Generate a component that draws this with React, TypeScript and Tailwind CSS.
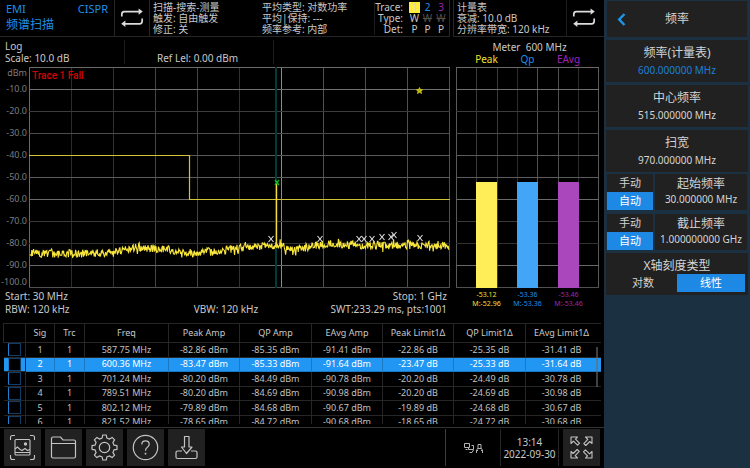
import type { ReactNode } from "react";

const FONT = "font-['Noto_Sans','Noto_Sans_CJK_SC',sans-serif]";

/* ---------- icons ---------- */

function LoopIcon() {
  return (
    <svg width="24" height="20" viewBox="0 0 24 20" fill="none" stroke="#dcdcdc" strokeWidth="1.7" aria-hidden="true">
      <path d="M1.8 8.6V6.2Q1.8 3.6 4.4 3.6H19" />
      <path d="M18.6 .4L22.8 3.6L18.6 6.8Z" fill="#dcdcdc" stroke="none" />
      <path d="M22.2 10.6V13Q22.2 15.8 19.6 15.8H5" />
      <path d="M5.4 12.6L1.2 15.8L5.4 19Z" fill="#dcdcdc" stroke="none" />
    </svg>
  );
}

function ScreenshotIcon() {
  return (
    <svg width="27" height="27" viewBox="0 0 27 27" fill="none" stroke="#c4c4c4" strokeWidth="1.1" aria-hidden="true">
      <path d="M1.5 6V3.5Q1.5 1.5 3.5 1.5H6M21 1.5H23.5Q25.5 1.5 25.5 3.5V6M25.5 21V23.5Q25.5 25.5 23.5 25.5H21M6 25.5H3.5Q1.5 25.5 1.5 23.5V21" />
      <rect x="6" y="5.5" width="15" height="15.5" rx="1" />
      <circle cx="16.5" cy="10" r="1.1" fill="#c4c4c4" />
      <path d="M6 15L8.5 13L11 15.5L13 16.5L16 14.5L18.5 16.5L21 15.5M6 18.5H21" />
    </svg>
  );
}

function FolderIcon() {
  return (
    <svg width="27" height="25" viewBox="0 0 27 25" fill="none" stroke="#c4c4c4" strokeWidth="1.2" aria-hidden="true">
      <path d="M1.5 21.5V3.5Q1.5 2 3 2H10.5L13 5H24Q25.5 5 25.5 6.5V21.5Q25.5 23 24 23H3Q1.5 23 1.5 21.5ZM1.5 8.5H25.5" />
    </svg>
  );
}

function GearIcon() {
  const teeth = 8;
  const pts: string[] = [];
  for (let i = 0; i < teeth; i++) {
    const base = (i / teeth) * Math.PI * 2 - Math.PI / 2;
    const shape: [number, number][] = [
      [-0.24, 9.8],
      [-0.14, 12.6],
      [0.14, 12.6],
      [0.24, 9.8],
    ];
    for (const [d, r] of shape) {
      pts.push(`${(13.5 + Math.cos(base + d) * r).toFixed(1)},${(13.5 + Math.sin(base + d) * r).toFixed(1)}`);
    }
  }
  return (
    <svg width="27" height="27" viewBox="0 0 27 27" fill="none" stroke="#c4c4c4" strokeWidth="1.2" strokeLinejoin="round" aria-hidden="true">
      <polygon points={pts.join(" ")} />
      <circle cx="13.5" cy="13.5" r="5.2" />
    </svg>
  );
}

function HelpIcon() {
  return (
    <svg width="27" height="27" viewBox="0 0 27 27" fill="none" stroke="#c4c4c4" strokeWidth="1.2" aria-hidden="true">
      <circle cx="13.5" cy="13.5" r="12.2" />
      <path d="M9.8 10.5Q9.8 6.8 13.5 6.8T17.2 10.3Q17.2 12 15.4 13.2Q13.5 14.4 13.5 16.8" />
      <path d="M13.5 18.8V20.5" strokeWidth="1.6" />
    </svg>
  );
}

function SaveIcon() {
  return (
    <svg width="25" height="25" viewBox="0 0 25 25" fill="none" stroke="#c4c4c4" strokeWidth="1.2" strokeLinejoin="round" aria-hidden="true">
      <path d="M10.5 1.5H15V12H18L12.5 18.5L7.500 12H10.500Z" />
      <path d="M8 16H3.5Q2 16 2 17.5V22Q2 23.5 3.5 23.5H21.5Q23 23.5 23 22V17.5Q23 16 21.5 16H17" />
    </svg>
  );
}

function ExpandIcon() {
  const arrow = "M2 2H8.5L6.5 4.2L10.5 8.2L8.6 10.2L4.4 6.2L2 8.5Z";
  return (
    <svg width="25" height="25" viewBox="0 0 25 25" fill="none" stroke="#c4c4c4" strokeWidth="1.1" strokeLinejoin="round" aria-hidden="true">
      <path d={arrow} />
      <path d={arrow} transform="rotate(90 12.5 12.5)" />
      <path d={arrow} transform="rotate(180 12.5 12.5)" />
      <path d={arrow} transform="rotate(270 12.5 12.5)" />
    </svg>
  );
}

function NetworkIcon() {
  return (
    <svg width="21" height="12" viewBox="0 0 21 12" fill="none" stroke="#b4b4b4" strokeWidth="1" aria-label="LAN" role="img">
      <path d="M1.5 1.5H6.500V5.500H1.500ZM2.500 7.500H4.500" />
      <path d="M8.500 3.500H10.500V7.500H5.500V5.500M6.500 10.500H9L10.500 8" />
      <path d="M13.500 11V8.500L14.500 6.500H18.500L19.500 8.500V11M15 6.500V2.500H18V6.500M13.500 8.500H15M18 8.500H19.500" />
    </svg>
  );
}

/* ---------- spectrum plot ---------- */

const H_SHADES = ["#6a6a6a", "#707070", "#3c3c3c", "#4c4c4c", "#5a5a5a", "#5c5c5c", "#6a6a6a", "#3a3a3a", "#303030", "#686868", "#505050"];
const V_SHADES = ["#6a6a6a", "#2c2c2c", "#303030", "#444444", "#444444", "#303030", "#8a8a8a", "#505050", "#505050", "#505050", "#505050"];

const BASELINE: [number, number][] = [
  [0, 185], [15, 187], [85, 186], [106, 181], [136, 182], [161, 186], [181, 185],
  [211, 181], [246, 178], [262, 182], [280, 180], [296, 177], [330, 178], [420, 179],
];

function baselineAt(x: number) {
  for (let i = 1; i < BASELINE.length; i++) {
    const [x0, y0] = BASELINE[i - 1];
    const [x1, y1] = BASELINE[i];
    if (x <= x1) return y0 + ((y1 - y0) * (x - x0)) / (x1 - x0);
  }
  return 179;
}

function noiseTrace() {
  let seed = 90210;
  const next = () => {
    seed = (seed * 1103515245 + 12345) % 2147483648;
    return seed / 2147483648;
  };
  const pts: string[] = [];
  for (let x = 1; x <= 420; x += 0.6) {
    const swing = next() > 0.88 ? 14 : 8;
    pts.push(`${x.toFixed(1)},${(baselineAt(x) + (next() - 0.5) * swing).toFixed(1)}`);
  }
  return pts.join(" ");
}

const TRACE = noiseTrace();

const MARKERS: [number, number][] = [
  [242, 172], [291, 172], [330, 172], [335, 172], [343, 172], [353, 170], [362, 170], [365, 168], [391, 171],
];

function SpectrumPlot() {
  return (
    <svg className="block h-[221px] w-full" viewBox="0 0 421 221" preserveAspectRatio="none" role="img" aria-label="Spectrum">
      <g shapeRendering="crispEdges">
        {V_SHADES.map((c, i) => (
          <rect key={i} x={i * 42} y="0" width="1" height="221" fill={c} />
        ))}
        {H_SHADES.map((c, i) => (
          <rect key={i} x="0" y={i * 22} width="421" height="1" fill={c} />
        ))}
        <rect x="246" y="0" width="2" height="221" fill="#033a38" />
      </g>
      <path d="M0 88.5H160.5V132.5H421" fill="none" stroke="#d2c238" strokeWidth="1.2" />
      <polyline points={TRACE} fill="none" stroke="#f8e63c" strokeWidth="1.1" />
      <path d="M247.5 180V117" stroke="#f3dc3a" strokeWidth="1.4" />
      <g fill="none" stroke="#e0e0e0" strokeWidth="1.1">
        {MARKERS.map(([x, y]) => (
          <path key={x} d={`M${x - 2.5} ${y - 3}L${x + 2.5} ${y + 3}M${x + 2.5} ${y - 3}L${x - 2.5} ${y + 3}`} />
        ))}
      </g>
      <path d="M246 113L250 118M250 113L246 118" stroke="#10c020" strokeWidth="1.3" />
      <path d="M390.5 20.5L391.4 22.6L393.6 22.8L392 24.3L392.5 26.5L390.5 25.3L388.5 26.5L389 24.3L387.4 22.8L389.6 22.6Z" fill="#b8b410" stroke="#e0dc10" strokeWidth="0.7" />
    </svg>
  );
}

function MeterPlot() {
  const cols = [0, 20, 41, 61, 81, 102, 122, 142];
  const shades = ["#5a5a5a", "#3a3a3a", "#3a3a3a", "#2c2c2c", "#505050", "#505050", "#2c2c2c", "#5a5a5a"];
  return (
    <svg className="block h-[221px] w-full" viewBox="0 0 143 221" preserveAspectRatio="none" shapeRendering="crispEdges" role="img" aria-label="Meter">
      {cols.map((x, i) => (
        <rect key={x} x={x} y="0" width="1" height="221" fill={shades[i]} />
      ))}
      {H_SHADES.map((c, i) => (
        <rect key={i} x="0" y={i * 22} width="143" height="1" fill={c} />
      ))}
      <rect x="20" y="115" width="21" height="106" fill="#ffee58" />
      <rect x="61" y="115" width="21" height="106" fill="#42a5f5" />
      <rect x="102" y="115" width="21" height="106" fill="#ab47bc" />
    </svg>
  );
}

/* ---------- signal table ---------- */

const HEADS = ["Sig", "Trc", "Freq", "Peak Amp", "QP Amp", "EAvg Amp", "Peak Limit1Δ", "QP Limit1Δ", "EAvg Limit1Δ"];
const ROWS = [
  ["1", "1", "587.75 MHz", "-82.86 dBm", "-85.35 dBm", "-91.41 dBm", "-22.86 dB", "-25.35 dB", "-31.41 dB"],
  ["2", "1", "600.36 MHz", "-83.47 dBm", "-85.33 dBm", "-91.64 dBm", "-23.47 dB", "-25.33 dB", "-31.64 dB"],
  ["3", "1", "701.24 MHz", "-80.20 dBm", "-84.49 dBm", "-90.78 dBm", "-20.20 dB", "-24.49 dB", "-30.78 dB"],
  ["4", "1", "789.51 MHz", "-80.20 dBm", "-84.69 dBm", "-90.98 dBm", "-20.20 dB", "-24.69 dB", "-30.98 dB"],
  ["5", "1", "802.12 MHz", "-79.89 dBm", "-84.68 dBm", "-90.67 dBm", "-19.89 dB", "-24.68 dB", "-30.67 dB"],
  ["6", "1", "821.52 MHz", "-78.65 dBm", "-84.72 dBm", "-90.68 dBm", "-18.65 dB", "-24.72 dB", "-30.68 dB"],
];

function SignalTable() {
  return (
    <div className="relative mx-[3px] h-[101px] overflow-hidden">
      <table className="h-[107px] w-full table-fixed border-collapse text-center text-[9px] leading-[12px]">
        <colgroup>
          <col className="w-[22px]" />
          <col className="w-[29px]" />
          <col className="w-[30px]" />
          <col className="w-[84px]" />
          <col className="w-[71px]" />
          <col className="w-[72px]" />
          <col className="w-[71px]" />
          <col className="w-[71px]" />
          <col className="w-[72px]" />
          <col className="w-[76px]" />
        </colgroup>
        <thead>
          <tr className="h-[19px]">
            <th className="border border-[#262626] p-0" aria-label="Select" />
            {HEADS.map((h) => (
              <th key={h} className="border border-[#262626] p-0 font-normal whitespace-nowrap last:pr-1">{h}</th>
            ))}
          </tr>
        </thead>
        <tbody>
          {ROWS.map((row, r) => (
            <tr key={row[0]} className={r === 1 ? "bg-[#2196f3] text-white" : "text-[#c0c0c0]"}>
              <td className="border-r border-b border-[#262626] p-0">
                <input
                  type="checkbox"
                  aria-label={`Signal ${row[0]}`}
                  className="mx-auto block h-[13px] w-[13px] appearance-none border border-[#0f3d66] border-l-[#2080d0] bg-black"
                />
              </td>
              {row.map((cell, c) => (
                <td
                  key={c}
                  className={
                    r === 1
                      ? "border-r border-b border-[#1c78c0] p-0 whitespace-nowrap last:pr-1"
                      : "border-r border-b border-[#262626] p-0 whitespace-nowrap last:pr-1"
                  }
                >
                  {cell}
                </td>
              ))}
            </tr>
          ))}
        </tbody>
      </table>
      <div className="absolute top-[24px] right-[3px] h-[40px] w-[2px] bg-[#6a6a6a]/60" />
    </div>
  );
}

/* ---------- side menu ---------- */

function ValueKey({ label, value, active }: { label: string; value: string; active?: boolean }) {
  return (
    <button type="button" className="flex h-[42px] flex-col items-center justify-center gap-[3px] bg-[#212121]">
      <span className="text-[12px] leading-[15px]">{label}</span>
      <span className={active ? "text-[10px] leading-[14px] text-[#1e7fd6]" : "text-[10px] leading-[14px]"}>{value}</span>
    </button>
  );
}

function AutoKey({ label, value }: { label: string; value: string }) {
  return (
    <div className="mx-px flex h-9 gap-[2px]">
      <div className="flex w-[46px] flex-col text-[11px] leading-[18px]" role="group" aria-label={label}>
        <button type="button" aria-pressed="false" className="h-[18px] bg-[#212121]">手动</button>
        <button type="button" aria-pressed="true" className="h-[18px] bg-[#1e88e5] text-white">自动</button>
      </div>
      <button type="button" className="flex flex-1 flex-col items-center bg-[#212121] pt-px whitespace-nowrap">
        <span className="text-[12px] leading-[17px]">{label}</span>
        <span className="text-[10px] leading-[14px]">{value}</span>
      </button>
    </div>
  );
}

function SideMenu() {
  return (
    <aside className="flex w-[146px] shrink-0 flex-col bg-[#1b3040] px-[2px] pt-px text-[#d4d4d4]">
      <div className="mx-px flex h-9 items-center bg-[#212121]">
        <button type="button" aria-label="返回" className="flex h-9 w-7 items-center justify-center">
          <svg width="9" height="13" viewBox="0 0 9 13" fill="none" stroke="#1e96e8" strokeWidth="2.4" aria-hidden="true">
            <path d="M7.5 1L2.2 6.5L7.5 12" />
          </svg>
        </button>
        <h2 className="flex-1 pr-7 text-center text-[12px] leading-[16px]">频率</h2>
      </div>
      <div className="mt-[3px] flex flex-col gap-[3px]">
        <ValueKey label="频率(计量表)" value="600.000000 MHz" active />
        <ValueKey label="中心频率" value="515.000000 MHz" />
        <ValueKey label="扫宽" value="970.000000 MHz" />
      </div>
      <div className="mt-[2px] flex flex-col gap-1">
        <AutoKey label="起始频率" value="30.000000 MHz" />
        <AutoKey label="截止频率" value="1.000000000 GHz" />
      </div>
      <div className="mt-[3px] flex h-[42px] flex-col bg-[#212121] px-[3px] pt-1" role="group" aria-label="X轴刻度类型">
        <span className="text-center text-[12px] leading-[17px]">X轴刻度类型</span>
        <div className="grid grid-cols-2 text-[11px] leading-[18px]">
          <button type="button" aria-pressed="false" className="h-[18px]">对数</button>
          <button type="button" aria-pressed="true" className="h-[18px] bg-[#1e88e5] text-white">线性</button>
        </div>
      </div>
    </aside>
  );
}

/* ---------- page ---------- */

function ToolButton({ label, children }: { label: string; children: ReactNode }) {
  return (
    <button type="button" aria-label={label} className="flex h-[37px] w-[37px] items-center justify-center bg-[#212121]">
      {children}
    </button>
  );
}

const AXIS = ["-10.0", "-20.0", "-30.0", "-40.0", "-50.0", "-60.0", "-70.0", "-80.0", "-90.0"];

export default function App() {
  return (
    <div className={`${FONT} flex min-h-screen bg-black text-[10px] leading-[12px] text-[#c8c8c8]`}>
      <main className="flex min-w-0 flex-1 flex-col">
        <header className="grid h-[37px] grid-cols-[minmax(0,1fr)_151px] gap-[3px] leading-[11px] whitespace-nowrap">
          <div className="flex border-r border-b border-[#262626]">
            <button type="button" className="flex w-[115px] flex-col gap-px border-r border-[#262626] px-[6px] pt-[2px] text-left text-[#1e8fe6]">
              <span className="flex w-full justify-between text-[11px] leading-[14px]">
                <span>EMI</span>
                <span>CISPR</span>
              </span>
              <span className="text-[12px] leading-[16px]">频谱扫描</span>
            </button>
            <button type="button" aria-label="连续扫描" className="flex w-[35px] items-center justify-center border-r border-[#262626]">
              <LoopIcon />
            </button>
            <div className="flex flex-1 pt-[2px] pl-[3px]">
              <div className="w-[109px]">
                <p>扫描-搜索-测量</p>
                <p>触发: 自由触发</p>
                <p>修正: 关</p>
              </div>
              <div>
                <p>平均类型: 对数功率</p>
                <p>平均|保持: ---</p>
                <p>频率参考: 内部</p>
              </div>
            </div>
            <table className="mt-[2px] mr-px mb-px border-l border-[#1c1c1c] text-center leading-[11px]">
              <tbody>
                <tr>
                  <th className="p-0 pr-[5px] text-right font-normal">Trace:</th>
                  <td className="w-[13px] p-0"><span className="mx-px block bg-[#ffeb3b] text-[#d8d8b0]">1</span></td>
                  <td className="w-[13px] p-0 text-[#1e8fe6]">2</td>
                  <td className="w-[14px] p-0 text-[#9c27b0]">3</td>
                </tr>
                <tr>
                  <th className="p-0 pr-[5px] text-right font-normal">Type:</th>
                  <td className="p-0">W</td>
                  <td className="p-0 text-[#505050] line-through">W</td>
                  <td className="p-0 text-[#505050] line-through">W</td>
                </tr>
                <tr>
                  <th className="p-0 pr-[5px] text-right font-normal">Det:</th>
                  <td className="p-0">P</td>
                  <td className="p-0">P</td>
                  <td className="p-0">P</td>
                </tr>
              </tbody>
            </table>
          </div>
          <div className="flex border-b border-l border-[#262626]">
            <div className="flex-1 pt-[2px] pl-[3px]">
              <p>计量表</p>
              <p>衰减: 10.0 dB</p>
              <p>分辨率带宽: 120 kHz</p>
            </div>
            <button type="button" aria-label="连续测量" className="flex w-[38px] items-center justify-center border-l border-[#1c1c1c] pr-1">
              <LoopIcon />
            </button>
          </div>
        </header>

        <div className="grid grid-cols-[minmax(0,1fr)_151px] gap-[3px]">
          <section>
            <div className="flex h-[30px] py-[3px] whitespace-nowrap">
              <div className="w-[125px] border-r border-[#1c1c1c] pl-[5px]">
                <p>Log</p>
                <p>Scale: 10.0 dB</p>
              </div>
              <div className="flex w-[149px] items-end border-r border-[#1c1c1c] pl-8">
                <p>Ref Lel: 0.00 dBm</p>
              </div>
            </div>
            <div className="flex">
              <div className="flex h-[221px] w-[29px] flex-col pr-[2px] text-right text-[9px] text-[#7c7c7c]">
                <span className="h-[11px] leading-[11px]">dBm</span>
                {AXIS.map((a) => (
                  <span key={a} className="flex h-[22px] items-center justify-end">{a}</span>
                ))}
                <span className="h-[11px] leading-[11px]">-100.0</span>
              </div>
              <div className="relative min-w-0 flex-1">
                <SpectrumPlot />
                <span className="absolute top-[3px] left-[3px] font-['Roboto',sans-serif] font-medium text-[#d80000]">Trace 1 Fall</span>
              </div>
            </div>
            <div className="grid grid-cols-3 gap-y-px pt-[2px] pr-[3px] pl-[5px] whitespace-nowrap">
              <span>Start: 30 MHz</span>
              <span />
              <span className="text-right">Stop: 1 GHz</span>
              <span>RBW: 120 kHz</span>
              <span className="text-center">VBW: 120 kHz</span>
              <span className="text-right">SWT:233.29 ms, pts:1001</span>
            </div>
          </section>

          <section className="pr-[5px] pl-[3px]">
            <div className="h-[30px] pt-1 text-center">
              <p className="pl-[4px] whitespace-pre">Meter  600 MHz</p>
              <div className="grid grid-cols-3 px-[10px]">
                <span className="text-[#f0e030]">Peak</span>
                <span className="text-[#1e8fe6]">Qp</span>
                <span className="text-[#a020b8]">EAvg</span>
              </div>
            </div>
            <MeterPlot />
            <div className="grid grid-cols-3 px-[10px] pt-[2px] text-center text-[7px] leading-[9px] whitespace-nowrap">
              <p className="text-[#f0e030]">-53.12<br />M:-52.96</p>
              <p className="text-[#1e8fe6]">-53.36<br />M:-53.36</p>
              <p className="text-[#9c27b0]">-53.46<br />M:-53.46</p>
            </div>
          </section>
        </div>

        <div className="mt-2">
          <SignalTable />
        </div>

        <footer className="mt-[3px] flex items-center gap-1 border-t border-[#333333] px-1 pt-px">
          <ToolButton label="截图"><ScreenshotIcon /></ToolButton>
          <ToolButton label="文件"><FolderIcon /></ToolButton>
          <ToolButton label="设置"><GearIcon /></ToolButton>
          <ToolButton label="帮助"><HelpIcon /></ToolButton>
          <ToolButton label="保存"><SaveIcon /></ToolButton>
          <div className="ml-auto flex h-[37px] border-l border-[#3c3c3c]">
            <div className="flex w-[54px] items-center justify-center">
              <NetworkIcon />
            </div>
            <div className="flex w-[59px] flex-col items-center justify-center border-x border-[#262626] whitespace-nowrap">
              <time>13:14</time>
              <time>2022-09-30</time>
            </div>
          </div>
          <ToolButton label="全屏"><ExpandIcon /></ToolButton>
        </footer>
      </main>
      <SideMenu />
    </div>
  );
}
